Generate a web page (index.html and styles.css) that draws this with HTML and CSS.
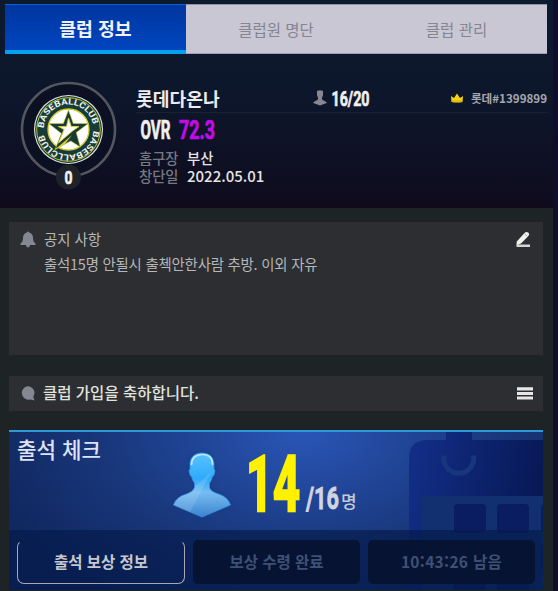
FILE: index.html
```html
<!DOCTYPE html>
<html lang="ko">
<head>
<meta charset="utf-8">
<title>클럽 정보</title>
<link rel="stylesheet" href="styles.css">
</head>
<body>
<main class="app">
  <header class="top">
    <nav class="tabs">
      <a class="tab active"><span>클럽 정보</span></a>
      <a class="tab"><span>클럽원 명단</span></a>
      <a class="tab"><span>클럽 관리</span></a>
    </nav>
    <section class="club">
      <svg class="emblem" width="100" height="112" viewBox="18 80 100 112">
        <defs>
          <path id="arcTop" d="M45.150 138a24.900 24.900 0 1 1 46.700 0"/>
          <path id="arcBottom" d="M91.850 121a24.900 24.900 0 1 1-46.700 0"/>
        </defs>
        <circle cx="68.5" cy="129.5" r="46.5" fill="#0b1022" stroke="#55575f" stroke-width="2.6"/>
        <circle cx="68.5" cy="129.5" r="34.5" fill="#dfe3df"/>
        <circle cx="68.5" cy="129.5" r="33.400" fill="#173b36"/>
        <circle cx="68.5" cy="129.5" r="31.8" fill="none" stroke="#d5cd31" stroke-width=".9"/>
        <circle cx="68.5" cy="129.5" r="20.5" fill="#fff" stroke="#d5cd31" stroke-width="1.3"/>
        <text class="ringtext"><textPath href="#arcTop" textLength="72" lengthAdjust="spacingAndGlyphs" startOffset="10">BASEBALLCLUB</textPath></text>
        <text class="ringtext"><textPath href="#arcBottom" textLength="72" lengthAdjust="spacingAndGlyphs" startOffset="10">BASEBALLCLUB</textPath></text>
        <path d="M68.500 110l4.800 13.500h15l-12 9 4 14.500-9.500-6-15.500 8 6-15.500-12.500-10h14.500z" fill="#173b36" stroke="#d5cd31" stroke-width=".6"/>
        <path d="M68.500 118l2.700 8.500h7.800l-6.500 4.500-14 12 5.500-13.500-5.500-3h8z" fill="#fff" stroke="#d5cd31" stroke-width="1"/>
        <path d="M52 152l20-17-7 9z" fill="#d5cd31"/>
        <circle cx="68.500" cy="177" r="12.500" fill="#1d2329"/>
        <text class="cond heavy" x="64.500" y="184" font-size="19" textLength="8" lengthAdjust="spacingAndGlyphs">0</text>
      </svg>
      <div class="details">
        <div class="title-row">
          <strong class="name">롯데다온나</strong>
          <div class="members">
            <svg width="14" height="16" viewBox="0 0 14 16"><path fill="#858792" d="M4 1Q7-.5 10 1V5L9 8v1.500l4.700 2.700V13L7 15.500.3 13v-.8L5 9.500V8L4 5z"/></svg>
            <svg width="40" height="18" viewBox="0 0 40 18"><text class="cond heavy" x="0.500" y="16.500" font-size="21" textLength="38" lengthAdjust="spacingAndGlyphs">16/20</text></svg>
          </div>
          <div class="owner">
            <svg width="12" height="10" viewBox="0 0 12 10"><path fill="#f3d313" d="M0 3l3 2L6 .5 9 5l3-2-.5 6Q6 10.200.5 9z"/><path fill="#bd8c08" d="M.5 7Q6 8 11.500 7l-.3 2Q6 10.200.8 9z" opacity=".35"/></svg>
            <span>롯데#1399899</span>
          </div>
        </div>
        <svg class="ovr" width="80" height="22" viewBox="0 0 80 22">
          <text class="cond heavy" x="0.500" y="20" font-size="25" textLength="30" lengthAdjust="spacingAndGlyphs">OVR</text>
          <text class="cond heavy rating" x="39" y="20" font-size="25" textLength="36" lengthAdjust="spacingAndGlyphs">72.3</text>
        </svg>
        <dl class="facts">
          <dt>홈구장</dt><dd>부산</dd>
          <dt>창단일</dt><dd class="date">2022.05.01</dd>
        </dl>
      </div>
    </section>
  </header>
  <section class="notice">
    <svg class="bell" width="16" height="17" viewBox="0 0 16 17"><path fill="#858792" d="M6.800 1.500q1.200-2 2.400 0Q13 2.500 13 7q0 4 2.500 5.500V14H.5v-1.500Q3 11 3 7q0-4.500 3.800-5.500zM6 14h4q-.3 2.500-2 2.500T6 14z"/></svg>
    <div class="notice-text"><h2>공지 사항</h2><p>출석15명 안될시 출첵안한사람 추방. 이외 자유</p></div>
    <svg class="edit" width="15" height="17" viewBox="0 0 15 17"><path fill="#f1f1ef" d="M.8 10.500L8.500 2q2-2 4-.2 1.500 1.700-.3 3.500L5 12.500.5 14.500z"/><path d="M8.500 2.700l3.200 2.800" stroke="#88898b" stroke-width=".6"/><path fill="#d5d5d3" d="M.5 13.500h13.500v2.500H.5z"/></svg>
  </section>
  <section class="message">
    <svg width="15" height="15" viewBox="0 0 15 15"><path fill="#858792" d="M7.300.3a7 6.700 0 0 1 5.900 10.500l1.300 3.700-4-1A7 6.700 0 1 1 7.300.3z"/></svg>
    <span>클럽 가입을 축하합니다.</span>
    <svg class="menu" width="16" height="13" viewBox="0 0 16 13"><path fill="#e8e6e6" d="M0 .3h16v3.200H0zM0 5h16v3H0zM0 9.600h16v2.900H0z"/></svg>
  </section>
  <section class="attendance">
    <svg class="calendar" width="135" height="160" viewBox="0 0 135 160">
      <defs><linearGradient id="cal" x2="1" y2=".25"><stop stop-color="#132f89"/><stop offset="1" stop-color="#071855"/></linearGradient></defs>
      <path fill="url(#cal)" d="M1 28Q1 10 19 10H38V2H64V10H136V160H1z"/>
      <path fill="#122f70" d="M14 66h122v94H14z"/>
      <path d="M29 25.500a15 15 0 1 0 29.500 0" transform="translate(7)" fill="none" stroke="#17367d" stroke-width="5"/>
      <g fill="#0a1d60"><rect x="46" y="74" width="32" height="29" rx="4"/><rect x="89" y="74" width="32" height="29" rx="4"/><rect x="133" y="74" width="16" height="29" rx="4"/><rect x="46" y="114" width="32" height="50" rx="4"/><rect x="89" y="114" width="32" height="50" rx="4"/><rect x="133" y="114" width="16" height="26" rx="4"/></g>
    </svg>
    <div class="summary">
      <h2>출석 체크</h2>
      <svg class="person" width="62" height="68" viewBox="0 0 62 68">
        <defs>
          <linearGradient id="body" x2="0" y2="1"><stop stop-color="#5bc3ff"/><stop offset=".4" stop-color="#2eaafa"/><stop offset=".62" stop-color="#76bcf2"/><stop offset="1" stop-color="#3a84cf"/></linearGradient>
        </defs>
        <path fill="url(#body)" stroke="#3b91dd" stroke-width=".8" d="M29 2C37 2 41.500 7 41 15v3q1.500 1 .5 4.500-.5 2.500-2 3Q38.500 30 36.500 32v4.500q1 4 9 6.500Q55 46 57.500 54L29 66 .5 54Q3 46 13.500 43q7-2.500 8-6.500V32q-2-2-3-6.500-1.500-.5-2-3-1-3.500.5-4.500v-3C16.500 7 21 2 29 2z"/>
        <path fill="none" stroke="#bce8ff" stroke-width="1.600" d="M18.500 14Q18.500 4 29 3.500T39.500 14"/>
        <path fill="#fff" opacity=".12" d="M39 20L17 61 .5 54Q3 46 13.500 43 21 41 21.500 36z"/>
      </svg>
      <svg class="count" width="114" height="62" viewBox="0 0 114 62">
        <text class="cond current" x="0" y="58.500" font-size="77" textLength="54" lengthAdjust="spacingAndGlyphs">14</text>
        <text class="cond total" x="60" y="57" font-size="31" textLength="33" lengthAdjust="spacingAndGlyphs">/16</text>
        <text class="unit" x="95" y="56">명</text>
      </svg>
    </div>
    <div class="actions">
      <button class="reward"><span>출석 보상 정보</span></button>
      <button><span>보상 수령 완료</span></button>
      <button class="timer"><span>10:43:26 남음</span></button>
    </div>
  </section>
</main>
</body>
</html>
```
FILE: styles.css
```css
* { box-sizing: border-box; }
body {
  margin: 0;
  height: 591px;
  overflow: hidden;
  background: #100d2c;
  font-family: "Noto Sans CJK KR", sans-serif;
}
h2, p, dl, dd { margin: 0; }
svg { display: block; flex: none; overflow: visible; }
.app { width: 553px; height: 591px; background: #1e2326; }
.cond { font-family: Roboto, sans-serif; font-weight: 700; fill: #f0f0ee; }
.heavy { stroke: #f0f0ee; stroke-width: .7px; }
.ringtext { font: 700 8.5px Roboto, sans-serif; fill: #eef2ee; }

.top {
  height: 208px;
  padding: 4px 6px 0 5px;
  background: linear-gradient(#0c1a30, #0d162b 50%, #0f0b1d);
}
.tabs { display: grid; grid-template-columns: 181px 180px 181px; height: 50px; }
.tab {
  display: flex;
  align-items: center;
  justify-content: center;
  background: #c8c7d3;
  border-top: 1px solid #8d94a5;
  border-bottom: 1px solid #a0a1ae;
  color: #858492;
  font-size: 15.5px;
  line-height: 20px;
}
.tab span { margin-top: -1px; }
.tab.active {
  background: linear-gradient(#0036a0, #0045bf);
  border-top-color: #0863cd;
  border-bottom: 4px solid #00a2ee;
  color: #f1f3fb;
  font-size: 18.3px;
  font-weight: 700;
}
.tab.active span { margin-top: 0; }
.club { display: flex; padding: 26px 0 0 13px; }
.details { flex: 1; margin-left: 18px; }
.title-row {
  display: flex;
  align-items: center;
  height: 33px;
  padding-top: 4px;
  border-bottom: 1px solid #1b2131;
  white-space: nowrap;
}
.name { width: 177px; color: #ebecef; font-size: 18.2px; line-height: 24px; }
.members { display: flex; align-items: center; gap: 4px; }
.owner { display: flex; align-items: center; gap: 8px; margin-left: auto; }
.owner span { color: #a5a7ad; font-size: 11.6px; font-weight: 700; line-height: 16px; }
.ovr { margin: 6px 0 0 4px; }
.rating { fill: #c20ce8; stroke: #c20ce8; }
.facts {
  display: grid;
  grid-template-columns: 48px 1fr;
  grid-auto-rows: 18px;
  margin: 8px 0 0 3px;
  line-height: 18px;
  font-size: 14.3px;
}
.facts dt { color: #777981; font-weight: 500; }
.facts dd { color: #e5e5e3; font-weight: 500; }
.facts .date { font-size: 15px; }

.notice, .message { margin: 0 10px 0 9px; background: #2c2e32; display: flex; }
.notice { height: 133px; margin-top: 14px; padding: 8px 12px 0 11px; align-items: flex-start; }
.bell { margin-top: 1px; }
.notice-text { margin-left: 8px; color: #b6b7b9; font-size: 14.4px; line-height: 18px; white-space: nowrap; }
.notice-text h2 { font-size: 14.4px; font-weight: 400; line-height: 18px; }
.notice-text p { margin-top: 7px; letter-spacing: -.2px; }
.edit { margin: 1px 0 0 auto; }
.message {
  height: 35px;
  margin-top: 21px;
  padding: 0 10px 0 11px;
  align-items: center;
  color: #e2e3df;
  font-size: 15.5px;
  font-weight: 500;
}
.message span { margin: -3px 0 0 8px; }
.menu { margin-left: auto; }

.attendance {
  position: relative;
  height: 160px;
  margin: 19px 10px 0 9px;
  overflow: hidden;
  background: radial-gradient(ellipse 330px 200px at 55% 0, #2a56b7, #183679 62%, #10275f);
  border-top: 2px solid #3197d6;
}
.calendar { position: absolute; top: -2px; right: 0; }
.summary { position: relative; display: flex; height: 98px; padding-left: 8px; }
.summary h2 { width: 147px; margin-top: 5px; color: #dee2f2; font-size: 21.2px; font-weight: 500; line-height: 24px; }
.person { margin: 19px 0 0 9px; filter: drop-shadow(0 0 2px #123c87); }
.count { margin: 20px 0 0 11px; }
.current { fill: #fff100; stroke: #fff100; stroke-width: 2.5px; }
.total { fill: #d2d4df; stroke: #d2d4df; stroke-width: .8px; }
.unit { fill: #c5c8d6; font-size: 17px; font-weight: 500; }
.actions {
  position: relative;
  display: grid;
  grid-template-columns: 168px 167px 167px;
  gap: 8px;
  height: 60px;
  padding: 10px 8px 6px;
  background: rgba(5, 26, 75, .68);
}
.actions button {
  display: flex;
  align-items: center;
  justify-content: center;
  height: 44px;
  padding: 0;
  border: 0;
  border-radius: 5px;
  background: #071333;
  color: #3e5174;
  font: 700 15.5px/20px "Noto Sans CJK KR", sans-serif;
  white-space: nowrap;
}
.actions span { margin-top: -2px; }
.actions .reward {
  border: 1.500px solid #a8a8b2;
  border-top-color: transparent;
  border-radius: 7px;
  background: transparent;
  color: #c7c8cd;
}
.actions .timer { letter-spacing: .3px; }
```
